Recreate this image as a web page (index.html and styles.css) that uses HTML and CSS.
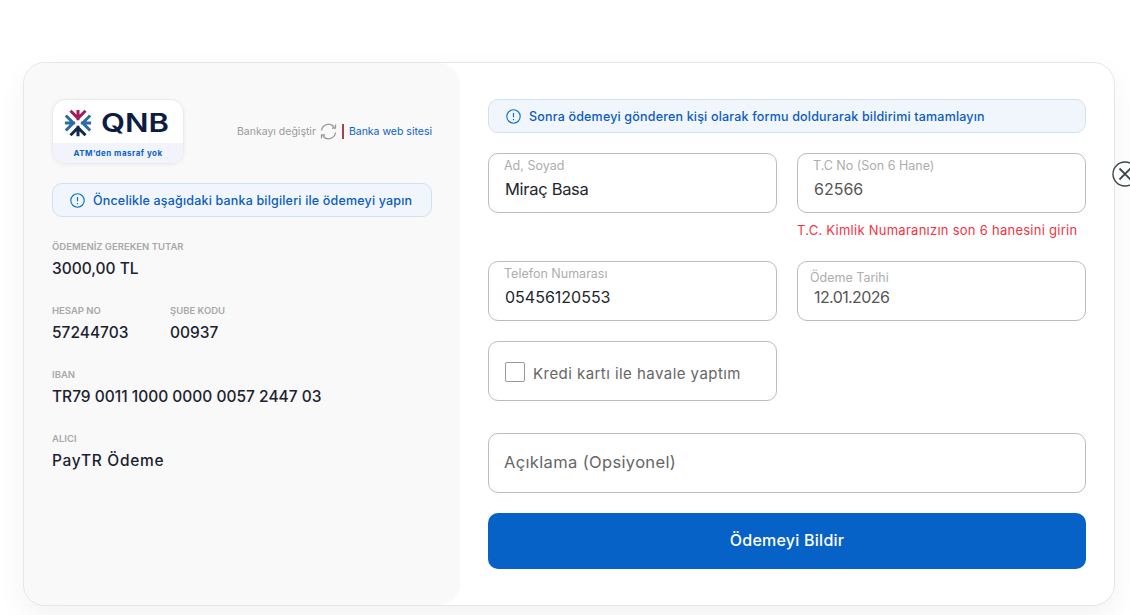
FILE: index.html
```html
<!DOCTYPE html>
<html lang="tr">
<head>
    <meta charset="UTF-8">
    <meta name="viewport" content="width=device-width, initial-scale=1.0">
    <title>Ödeme Bildirimi</title>
    <link rel="stylesheet" href="styles.css">
</head>
<body>
    <div class="card">
        <button class="close" aria-label="Kapat">
            <svg width="26" height="26" viewBox="0 0 26 26"><circle cx="13" cy="13" r="12" fill="#fff" stroke="#3c4650" stroke-width="1.4"/><path d="M7.500 7.500l11 11M18.500 7.500l-11 11" stroke="#3c4650" stroke-width="1.800" fill="none"/></svg>
        </button>
        <div class="bank-panel">
            <div class="bank-head">
                <div class="logo-box">
                    <div class="logo">
                        <svg class="logo-star" width="30" height="30" viewBox="0 0 32 32" fill="none" stroke-width="3.200">
                            <path d="M16 13V2M8 3l8 8 8-8" stroke="#a01c5c"/>
                            <path d="M13 16H2M3 8l8 8-8 8" stroke="#2b6ca3"/>
                            <path d="M19 16h11M29 8l-8 8 8 8" stroke="#2b6ca3"/>
                            <path d="M16 19v11M8 29l8-8 8 8" stroke="#12294f"/>
                        </svg>
                        <svg class="logo-word" width="72" height="32" viewBox="0 0 72 32"><text x="1" y="25" textLength="68" lengthAdjust="spacingAndGlyphs">QNB</text></svg>
                    </div>
                    <div class="logo-note">ATM’den masraf yok</div>
                </div>
                <div class="bank-links">
                    <span class="change">Bankayı değiştir</span>
                    <svg width="17" height="17" viewBox="0 0 17 17" fill="none" stroke="#9a9a9a" stroke-width="1.3"><path d="M1.5 7.5A7 7 0 0 1 14 4"/><path d="M15.5 1.5V5h-3.5"/><path d="M15.5 9.5A7 7 0 0 1 3 13"/><path d="M1.5 15.500V12H5"/></svg>
                    <span class="sep"></span>
                    <span class="web">Banka web sitesi</span>
                </div>
            </div>
            <div class="notice">
                <svg class="info" width="15" height="15" viewBox="0 0 15 15" fill="none"><circle cx="7.500" cy="7.500" r="6.700" stroke="#0b6fc2" stroke-width="1.100"/><path d="M7.500 4v4.300M7.500 10v1.200" stroke="#0b6fc2" stroke-width="1.200"/></svg>
                <span>Öncelikle aşağıdaki banka bilgileri ile ödemeyi yapın</span>
            </div>
            <div class="info-list">
                <div class="info-row">
                    <div class="info-item">
                        <div class="info-label">ÖDEMENİZ GEREKEN TUTAR</div>
                        <div class="info-value">3000,00 TL</div>
                    </div>
                </div>
                <div class="info-row">
                    <div class="info-item hesap">
                        <div class="info-label">HESAP NO</div>
                        <div class="info-value">57244703</div>
                    </div>
                    <div class="info-item">
                        <div class="info-label">ŞUBE KODU</div>
                        <div class="info-value">00937</div>
                    </div>
                </div>
                <div class="info-row">
                    <div class="info-item">
                        <div class="info-label">IBAN</div>
                        <div class="info-value">TR79 0011 1000 0000 0057 2447 03</div>
                    </div>
                </div>
                <div class="info-row">
                    <div class="info-item">
                        <div class="info-label">ALICI</div>
                        <div class="info-value payee">PayTR Ödeme</div>
                    </div>
                </div>
            </div>
        </div>
        <div class="form-panel">
            <div class="notice wide">
                <svg class="info" width="15" height="15" viewBox="0 0 15 15" fill="none"><circle cx="7.500" cy="7.500" r="6.700" stroke="#0b6fc2" stroke-width="1.100"/><path d="M7.500 4v4.300M7.500 10v1.200" stroke="#0b6fc2" stroke-width="1.200"/></svg>
                <span>Sonra ödemeyi gönderen kişi olarak formu doldurarak bildirimi tamamlayın</span>
            </div>
            <div class="form-grid">
                <div class="group">
                    <div class="field">
                        <div class="field-label">Ad, Soyad</div>
                        <div class="field-value name">Miraç Basa</div>
                    </div>
                </div>
                <div class="group">
                    <div class="field">
                        <div class="field-label">T.C No (Son 6 Hane)</div>
                        <div class="field-value soft">62566</div>
                    </div>
                    <div class="error">T.C. Kimlik Numaranızın son 6 hanesini girin</div>
                </div>
                <div class="group">
                    <div class="field">
                        <div class="field-label">Telefon Numarası</div>
                        <div class="field-value">05456120553</div>
                    </div>
                </div>
                <div class="group">
                    <div class="field date">
                        <div class="field-label">Ödeme Tarihi</div>
                        <div class="field-value soft">12.01.2026</div>
                    </div>
                </div>
                <div class="group">
                    <div class="field check">
                        <span class="checkbox"></span>
                        <span class="check-text">Kredi kartı ile havale yaptım</span>
                    </div>
                </div>
            </div>
            <div class="field note">Açıklama (Opsiyonel)</div>
            <button class="submit">Ödemeyi Bildir</button>
        </div>
    </div>
</body>
</html>
```

FILE: styles.css
```css
*{
    box-sizing: border-box;
}
html, body{
    height: 100%;
}
body{
    margin: 0;
    padding: 62px 16px 0 23px;
    background-color: #fff;
    font-family: "Inter", "Noto Sans", sans-serif;
    overflow: hidden;
}
.card{
    position: relative;
    display: flex;
    width: 1092px;
    height: 544px;
    background-color: #fff;
    border: 1px solid #e6e6e6;
    border-radius: 22px;
    box-shadow: 0 12px 30px rgba(0, 0, 0, 0.05);
}
.close{
    position: absolute;
    top: 98px;
    left: 1088px;
    width: 26px;
    height: 26px;
    padding: 0;
    border: 0;
    background: none;
}
.bank-panel{
    width: 436px;
    padding: 36px 28px 0;
    background-color: #f9f9f9;
    border-radius: 22px;
}
.bank-head{
    display: flex;
    align-items: center;
    justify-content: space-between;
}
.logo-box{
    width: 132px;
    height: 65px;
    background-color: #fff;
    border: 1px solid #ececec;
    border-radius: 14px;
    overflow: hidden;
    box-shadow: 0 1px 4px rgba(0, 0, 0, 0.06);
}
.logo{
    display: flex;
    align-items: center;
    gap: 7px;
    height: 43px;
    padding: 3px 0 0 10px;
}
.logo-word text{
    font-family: "Inter", sans-serif;
    font-size: 26px;
    font-weight: 600;
    fill: #0c1c42;
}
.logo-note{
    height: 21px;
    background-color: #f1f5fb;
    color: #0b62c8;
    font-size: 8px;
    font-weight: 700;
    letter-spacing: 0.5px;
    line-height: 20px;
    text-align: center;
}
.bank-links{
    display: flex;
    align-items: center;
    gap: 4px;
    font-size: 10.500px;
}
.change{
    color: #9a9a9a;
}
.web{
    color: #0b62c8;
}
.sep{
    width: 2px;
    height: 15px;
    margin: 0 1px;
    background-color: #a5424f;
}
.notice{
    display: flex;
    align-items: center;
    gap: 8px;
    height: 34px;
    margin-top: 19px;
    padding-left: 17px;
    background-color: #f1f6fc;
    border: 1px solid #cfe2f5;
    border-radius: 10px;
    color: #0b5cc0;
    font-size: 12.500px;
    font-weight: 500;
    letter-spacing: 0.18px;
}
.notice.wide{
    margin-top: 0;
}
.info-list{
    margin-top: 23px;
}
.info-row{
    display: flex;
    height: 64px;
}
.hesap{
    width: 118px;
}
.info-label{
    height: 14px;
    color: #a8a8a8;
    font-size: 9.500px;
    font-weight: 600;
    line-height: 14px;
}
.info-value{
    margin-top: 4px;
    color: #1a2230;
    font-size: 15.500px;
    font-weight: 500;
    line-height: 22px;
}
.payee{
    letter-spacing: 0.7px;
}
.form-panel{
    flex: 1;
    padding: 36px 28px 0;
}
.form-grid{
    display: grid;
    grid-template-columns: 289px 289px;
    gap: 20px;
    margin-top: 20px;
}
.field{
    height: 60px;
    padding: 4px 15px 0;
    background-color: #fff;
    border: 1px solid #bcbcbc;
    border-radius: 10px;
}
.field-label{
    color: #adadad;
    font-size: 12.500px;
    line-height: 16px;
}
.field-value{
    margin-top: 3px;
    padding-left: 1px;
    color: #22262c;
    font-size: 16px;
    line-height: 24px;
}
.name{
    letter-spacing: -0.3px;
    font-size: 16.500px;
}
.soft{
    color: #555;
}
.date .field-label{
    margin: 4px 0 -4px -3px;
}
.date .field-value{
    letter-spacing: -0.6px;
}
.error{
    height: 28px;
    padding-top: 7px;
    color: #f5333f;
    font-size: 13px;
    letter-spacing: 0.26px;
    line-height: 21px;
}
.check{
    display: flex;
    align-items: center;
    gap: 8px;
    padding: 0 16px;
    color: #666;
    font-size: 15px;
    letter-spacing: 0.45px;
}
.checkbox{
    width: 20px;
    height: 20px;
    margin-top: 1px;
    border: 1px solid #999;
    border-radius: 2px;
}
.check-text{
    margin-top: 5px;
}
.note{
    display: flex;
    align-items: center;
    width: 598px;
    margin-top: 32px;
    padding: 0 15px 2px;
    color: #666;
    font-size: 16.500px;
    letter-spacing: 0.35px;
}
.submit{
    display: block;
    width: 598px;
    height: 56px;
    margin-top: 20px;
    padding-bottom: 3px;
    border: 0;
    border-radius: 10px;
    background-color: #0762c8;
    color: #fff;
    font-family: inherit;
    font-size: 16px;
    font-weight: 500;
    letter-spacing: 0.25px;
}
```
